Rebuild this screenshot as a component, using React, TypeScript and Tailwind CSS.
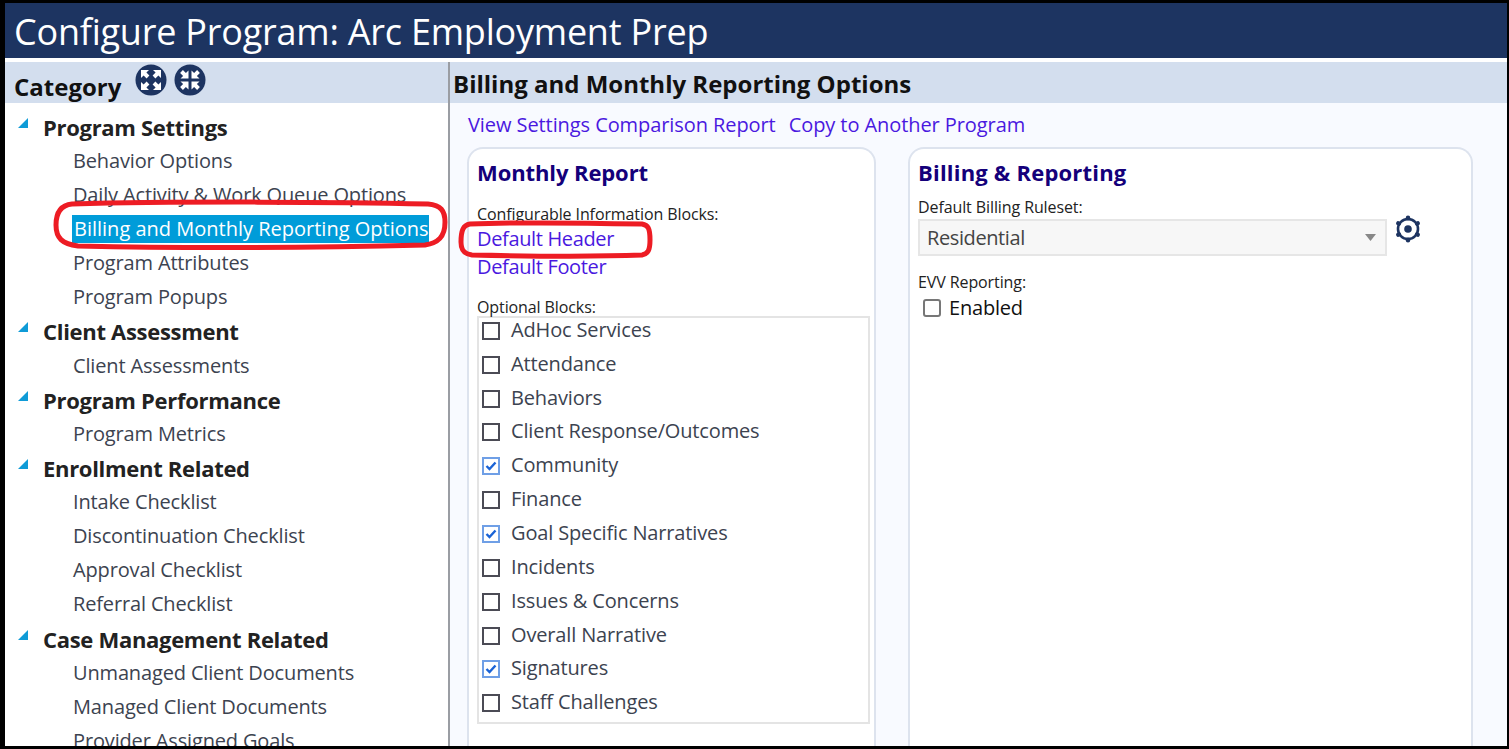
const tree = [
  { name: 'Program Settings', items: ['Behavior Options', 'Daily Activity & Work Queue Options', 'Billing and Monthly Reporting Options', 'Program Attributes', 'Program Popups'] },
  { name: 'Client Assessment', items: ['Client Assessments'] },
  { name: 'Program Performance', items: ['Program Metrics'] },
  { name: 'Enrollment Related', items: ['Intake Checklist', 'Discontinuation Checklist', 'Approval Checklist', 'Referral Checklist'] },
  { name: 'Case Management Related', items: ['Unmanaged Client Documents', 'Managed Client Documents', 'Provider Assigned Goals'] }
];

const blocks = [
  { name: 'AdHoc Services', checked: false },
  { name: 'Attendance', checked: false },
  { name: 'Behaviors', checked: false },
  { name: 'Client Response/Outcomes', checked: false },
  { name: 'Community', checked: true },
  { name: 'Finance', checked: false },
  { name: 'Goal Specific Narratives', checked: true },
  { name: 'Incidents', checked: false },
  { name: 'Issues & Concerns', checked: false },
  { name: 'Overall Narrative', checked: false },
  { name: 'Signatures', checked: true },
  { name: 'Staff Challenges', checked: false }
];

function ExpandIcon() {
  return (
    <svg width="32" height="32" viewBox="0 0 32 32">
      <circle cx="16" cy="16" r="15.5" fill="#1d3461" />
      <g fill="#fff">
        <path d="M6 6h8l-2.6 2.6 3 3-2.8 2.8-3-3L6 14z" />
        <path d="M26 6v8l-2.6-2.6-3 3-2.8-2.8 3-3L18 6z" />
        <path d="M6 26v-8l2.6 2.6 3-3 2.8 2.8-3 3L14 26z" />
        <path d="M26 26h-8l2.6-2.6-3-3 2.8-2.8 3 3L26 18z" />
      </g>
    </svg>
  );
}

function CollapseIcon() {
  return (
    <svg width="32" height="32" viewBox="0 0 32 32">
      <circle cx="16" cy="16" r="15.5" fill="#1d3461" />
      <g fill="#fff">
        <path d="M14.5 14.5h-8l2.6-2.6-3-3 2.8-2.8 3 3 2.6-2.6z" />
        <path d="M17.5 14.5v-8l2.6 2.6 3-3 2.8 2.8-3 3 2.6 2.6z" />
        <path d="M14.5 17.5v8l-2.6-2.6-3 3-2.8-2.8 3-3-2.6-2.6z" />
        <path d="M17.5 17.5h8l-2.6 2.6 3 3-2.8 2.8-3-3-2.6 2.6z" />
      </g>
    </svg>
  );
}

function GearIcon() {
  return (
    <svg width="28" height="28" viewBox="0 0 28 28" fill="none" stroke="#1d3461">
      <circle cx="14" cy="14" r="10" strokeWidth="2.6" />
      <g strokeWidth="4.5" strokeLinecap="round">
        <path d="M14 2.8v.5" />
        <path d="M14 24.7v.5" />
        <path d="M4.3 8.4l.45.25" />
        <path d="M23.25 19.35l.45.25" />
        <path d="M23.7 8.4l-.45.25" />
        <path d="M4.75 19.35l-.45.25" />
      </g>
      <circle cx="14" cy="14" r="3.8" fill="#1d3461" stroke="none" />
    </svg>
  );
}

function Checkbox({ checked }: { checked: boolean }) {
  if (checked) {
    return (
      <span className="flex h-[18px] w-[18px] shrink-0 items-center justify-center border-2 border-[#6f9fe6] bg-white">
        <svg width="12" height="10" viewBox="0 0 12 10" fill="none" stroke="#1a63d6" strokeWidth="2.4">
          <path d="M1.5 5l3 3 6-6.5" />
        </svg>
      </span>
    );
  }
  return <span className="h-[18px] w-[18px] shrink-0 border-2 border-[#4b4b55] bg-white" />;
}

export default function App() {
  return (
    <div className="relative flex h-[749px] w-[1509px] flex-col overflow-hidden border-t-[3px] border-r-2 border-b-[3px] border-l-[5px] border-black bg-white font-['Open_Sans',sans-serif]">
      {/* Title bar */}
      <div className="flex h-[55px] shrink-0 items-center bg-[#1d3461] pt-[3px] pl-[9px] text-[36px] tracking-[-0.22px] text-white">
        Configure Program: Arc Employment Prep
      </div>

      <div className="mt-1 flex min-h-0 flex-1">
        {/* Category tree */}
        <div className="flex w-[443px] shrink-0 flex-col">
          <div className="flex h-[41px] shrink-0 items-start bg-[#d3deee] pl-[9px]">
            <span className="mt-[9px] text-[24px] leading-[32px] font-bold text-[#111]">Category</span>
            <div className="mt-[2px] ml-[14px] flex gap-[7px]">
              <ExpandIcon />
              <CollapseIcon />
            </div>
          </div>
          <div className="pt-[7px]">
            {tree.map((group) => (
              <div key={group.name} className="pb-[0.5px]">
                <div className="flex h-[33.5px] items-center">
                  <svg width="10" height="10" viewBox="0 0 10 10" className="mt-[-8.5px] ml-[13px] shrink-0">
                    <path d="M0 10L10 0v10z" fill="#0f9bd7" />
                  </svg>
                  <span className="mt-[0.5px] ml-[15px] text-[22px] font-bold tracking-[-0.3px] text-[#222]">{group.name}</span>
                </div>
                {group.items.map((item) => (
                  <div key={item} className="flex h-[34.2px] items-center pl-[68px] text-[20px] tracking-[-0.15px] text-[#3c4350]">
                    {item === 'Billing and Monthly Reporting Options' ? (
                      <span className="ml-[-1px] flex h-[28px] w-[357px] items-center bg-[#009cd9] pl-[2px] tracking-normal whitespace-nowrap text-white">{item}</span>
                    ) : (
                      item
                    )}
                  </div>
                ))}
              </div>
            ))}
          </div>
        </div>

        <div className="w-[2px] shrink-0 bg-[#9a9da3]" />

        {/* Settings pane */}
        <div className="flex min-w-0 flex-1 flex-col bg-[#f8faff]">
          <div className="flex h-[41px] shrink-0 items-center bg-[#d3deee] pt-[3px] pl-[3px] text-[24px] font-bold text-[#111]">
            Billing and Monthly Reporting Options
          </div>
          <div className="flex h-[44px] shrink-0 items-center gap-[13px] pl-[18px] text-[20px] tracking-[-0.08px] text-[#4a18e0]">
            <span>View Settings Comparison Report</span>
            <span>Copy to Another Program</span>
          </div>
          <div className="flex min-h-0 flex-1 pl-[17px]">
            <div className="w-[409px] shrink-0 rounded-t-[16px] border-x-2 border-t-2 border-[#dde3ee] bg-white px-[8px]">
              <h2 className="mt-[8px] text-[22px] leading-[30px] font-bold tracking-[-0.1px] text-[#14007a]">Monthly Report</h2>
              <div className="mt-[17px] text-[16px] leading-[21px] tracking-[-0.1px] text-[#222]">Configurable Information Blocks:</div>
              <div className="text-[20px] leading-[28px] tracking-[-0.35px] text-[#4a18e0]">
                <div>Default Header</div>
                <div>Default Footer</div>
              </div>
              <div className="mt-[17px] text-[16px] leading-[18px] tracking-[-0.1px] text-[#222]">Optional Blocks:</div>
              <div className="mr-[-4px] h-[408px] overflow-hidden border-2 border-[#e4e4e4] bg-white pl-[3px]">
                <div className="mt-[-4px]">
                  {blocks.map((block) => (
                    <div key={block.name} className="flex h-[33.85px] items-center gap-[11px] text-[20px] tracking-[-0.15px] text-[#3c4350]">
                      <Checkbox checked={block.checked} />
                      <span className="mt-[-2px]">{block.name}</span>
                    </div>
                  ))}
                </div>
              </div>
            </div>
            <div className="ml-[32px] w-[565px] shrink-0 rounded-t-[16px] border-x-2 border-t-2 border-[#dde3ee] bg-white px-[8px]">
              <h2 className="mt-[8px] text-[22px] leading-[30px] font-bold tracking-[0.2px] text-[#14007a]">Billing &amp; Reporting</h2>
              <div className="mt-[10px] text-[16px] leading-[21px] tracking-[-0.1px] text-[#222]">Default Billing Ruleset:</div>
              <div className="mt-[1px] flex items-start">
                <div className="flex h-[37px] w-[469px] items-center justify-between border-2 border-[#e6e6e6] bg-[#f7f7f7] pr-[9px] pl-[7px] text-[20px] tracking-[-0.4px] text-[#444]">
                  <span>Residential</span>
                  <svg width="11" height="7" viewBox="0 0 11 7">
                    <path d="M0 0h11L5.5 7z" fill="#888" />
                  </svg>
                </div>
                <div className="mt-[-4px] ml-[7px]">
                  <GearIcon />
                </div>
              </div>
              <div className="mt-[16px] text-[16px] leading-[21px] tracking-[-0.1px] text-[#222]">EVV Reporting:</div>
              <div className="mt-[1px] ml-[5px] flex items-center gap-[8px] text-[20px] leading-[27px] tracking-[-0.2px] text-[#111]">
                <span className="h-[18px] w-[18px] rounded-[3px] border-2 border-[#777] bg-white" />
                <span>Enabled</span>
              </div>
            </div>
          </div>
        </div>
      </div>

      {/* Red annotations drawn over the screenshot */}
      <svg width="1509" height="749" className="pointer-events-none absolute top-[-3px] left-[-5px]" fill="none" stroke="#ed1c24" strokeWidth="5">
        <path d="M72 204C180 201 340 202 428 204C441 205 445 211 445 222C445 237 438 243 425 245C300 248 170 248 78 246C62 244 56 238 56 225C56 211 62 205 72 204z" />
        <path d="M470 224C520 222 590 223 642 224C648 225 650 228 650 240C650 250 648 254 642 255C590 257 520 256 472 255C464 254 461 250 461 242C461 231 463 225 470 224z" />
      </svg>
    </div>
  );
}
